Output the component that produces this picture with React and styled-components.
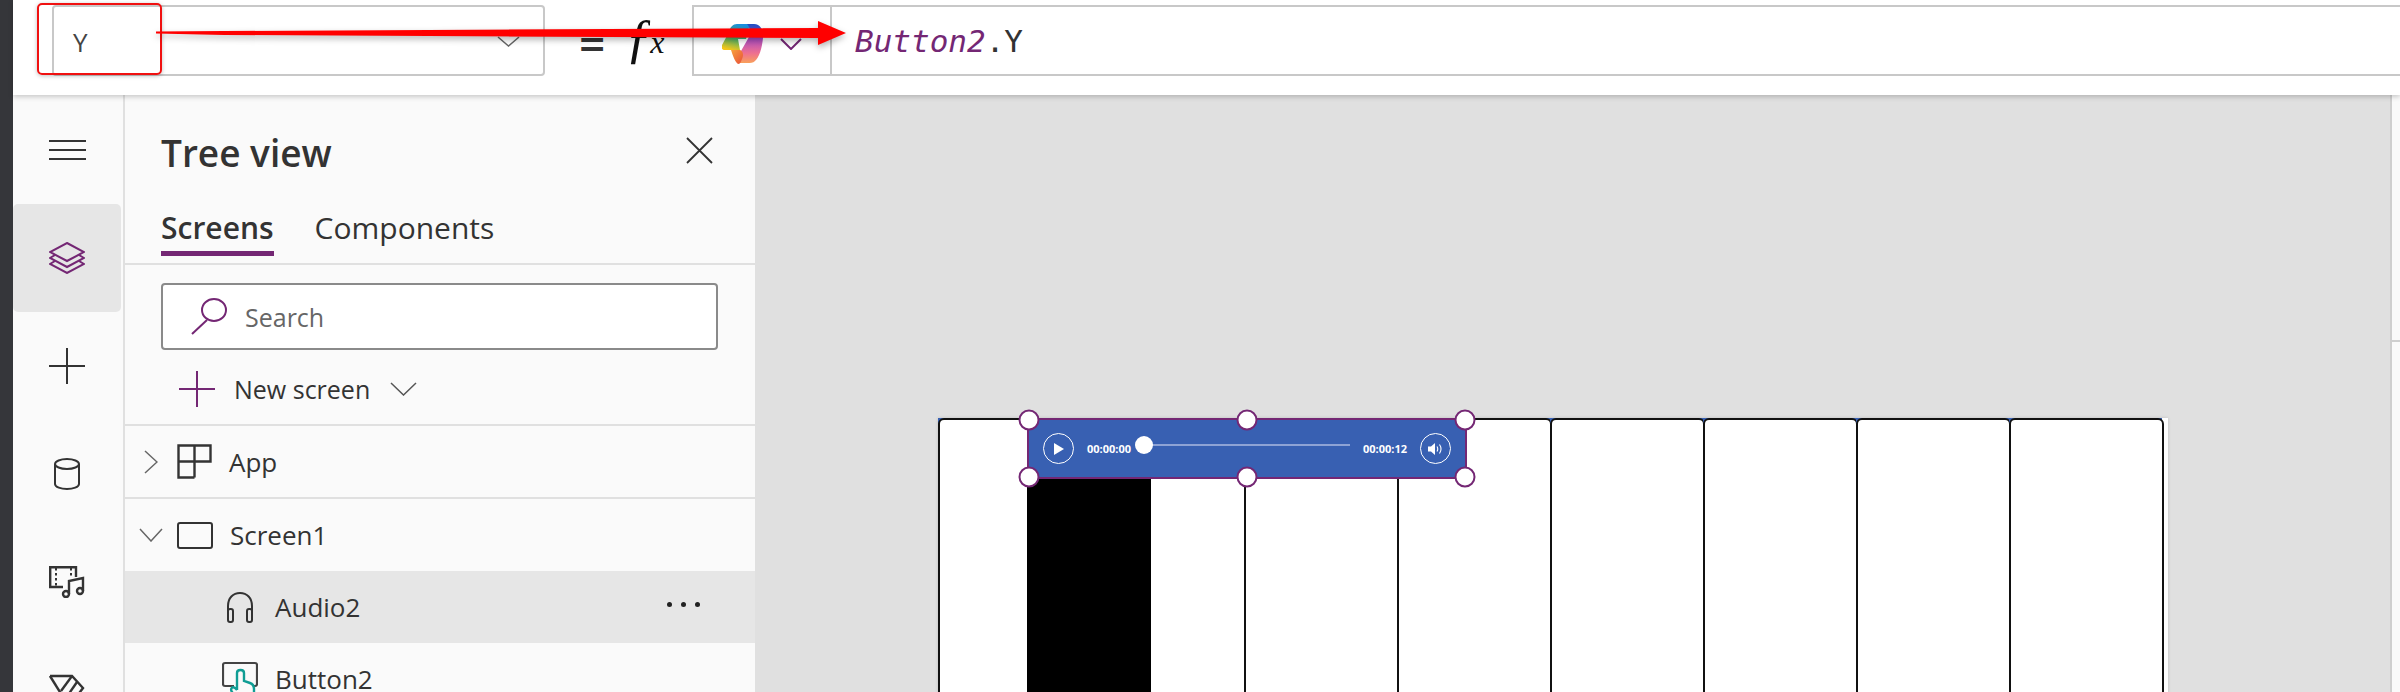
import React from "react";
import styled, { createGlobalStyle } from "styled-components";

const PURPLE = "#742774";
const INK = "#333333";

const KEY_COUNT = 8;

const App = () => {
  return (
    <Page>
      <GlobalStyle />
      <Strip />
      <Main>
        <TopBar>
          <NameBox>
            <NameValue>Y</NameValue>
            <svg width="23" height="11" viewBox="0 0 23 11" fill="none" stroke="#666" strokeWidth="1.5">
              <path d="M1 1 L11.5 10 L22 1" />
            </svg>
          </NameBox>
          <FxArea>
            <Equals>=</Equals>
            <Fx>
              ƒ<sup>x</sup>
            </Fx>
          </FxArea>
          <FormulaBox>
            <CopilotCell>
              <CopilotIcon />
              <svg width="22" height="12" viewBox="0 0 22 12" fill="none" stroke={PURPLE} strokeWidth="2">
                <path d="M1 1 L11 11 L21 1" />
              </svg>
            </CopilotCell>
            <FormulaText>
              <em>Button2</em>.Y
            </FormulaText>
          </FormulaBox>
        </TopBar>

        <Body>
          <Rail>
            <RailItem>
              <svg width="37" height="20" viewBox="0 0 37 20" stroke={INK} strokeWidth="2">
                <path d="M0 1 H37 M0 10 H37 M0 19 H37" />
              </svg>
            </RailItem>
            <RailItem $active>
              <svg width="36" height="32" viewBox="0 0 36 32" fill="none" stroke={PURPLE} strokeWidth="2">
                <path d="M18 1 L35 10 L18 19 L1 10 Z" />
                <path d="M6 13 L1 16 L18 25 L35 16 L30 13" />
                <path d="M6 19 L1 22 L18 31 L35 22 L30 19" />
              </svg>
            </RailItem>
            <RailItem>
              <svg width="36" height="36" viewBox="0 0 36 36" stroke={INK} strokeWidth="2">
                <path d="M0 18 H36 M18 0 V36" />
              </svg>
            </RailItem>
            <RailItem>
              <svg width="28" height="32" viewBox="0 0 28 32" fill="none" stroke={INK} strokeWidth="2">
                <ellipse cx="14" cy="6" rx="12" ry="5" />
                <path d="M2 6 V26 C2 29 8 31 14 31 C20 31 26 29 26 26 V6" />
              </svg>
            </RailItem>
            <RailItem>
              <svg width="37" height="32" viewBox="0 0 37 32" fill="none" stroke={INK} strokeWidth="2.4">
                <path d="M14 21 H1.2 V1.2 H27 V11" />
                <path d="M7 2 V21 M22 2 V10" strokeWidth="2" strokeDasharray="2.5 2.5" />
                <circle cx="17" cy="28" r="3" />
                <circle cx="31" cy="25" r="3" />
                <path d="M20 28 V15 L34 12 V25" />
              </svg>
            </RailItem>
            <RailItem>
              <svg width="36" height="32" viewBox="0 0 36 32" fill="none" stroke={INK} strokeWidth="2.4">
                <path d="M1 2 H23 L34 14 L22 30" />
                <path d="M1 2 L19 31" />
                <path d="M23 2 L12 17" />
                <path d="M28 8 L17 24" />
              </svg>
            </RailItem>
          </Rail>

          <Panel>
            <PanelHeader>
              <Title>Tree view</Title>
              <svg width="27" height="27" viewBox="0 0 27 27" stroke={INK} strokeWidth="1.8">
                <path d="M1 1 L26 26 M26 1 L1 26" />
              </svg>
            </PanelHeader>
            <Tabs>
              <Tab $active>Screens</Tab>
              <Tab>Components</Tab>
            </Tabs>
            <SearchBox>
              <svg width="37" height="37" viewBox="0 0 37 37" fill="none" stroke={PURPLE} strokeWidth="2">
                <ellipse cx="23" cy="12" rx="12" ry="11" />
                <path d="M16 22 L1 36" />
              </svg>
              <SearchLabel>Search</SearchLabel>
            </SearchBox>
            <NewScreen>
              <svg width="36" height="36" viewBox="0 0 36 36" stroke={PURPLE} strokeWidth="2">
                <path d="M0 18 H36 M18 0 V36" />
              </svg>
              <NewScreenLabel>New screen</NewScreenLabel>
              <svg width="27" height="14" viewBox="0 0 27 14" fill="none" stroke="#555" strokeWidth="1.5">
                <path d="M1 1 L13.5 13 L26 1" />
              </svg>
            </NewScreen>

            <Row $divider>
              <ChevronSlot>
                <svg width="14" height="24" viewBox="0 0 14 24" fill="none" stroke="#666" strokeWidth="1.5">
                  <path d="M1 1 L13 12 L1 23" />
                </svg>
              </ChevronSlot>
              <svg width="35" height="35" viewBox="0 0 35 35" fill="none" stroke={INK} strokeWidth="2.4">
                <path d="M1.5 1.5 H33.5 V17.5 H1.5 Z M17.5 1.5 V33.5 M1.5 17.5 V33.5 H17.5" />
              </svg>
              <RowLabel>App</RowLabel>
            </Row>
            <Row>
              <ChevronSlot>
                <svg width="24" height="14" viewBox="0 0 24 14" fill="none" stroke="#666" strokeWidth="1.5">
                  <path d="M1 1 L12 13 L23 1" />
                </svg>
              </ChevronSlot>
              <svg width="36" height="27" viewBox="0 0 36 27" fill="none" stroke={INK} strokeWidth="2">
                <rect x="1" y="1" width="34" height="25" rx="2" />
              </svg>
              <RowLabel>Screen1</RowLabel>
            </Row>
            <Row $child $selected>
              <IconSlot>
                <svg width="28" height="31" viewBox="0 0 28 31" fill="none" stroke={INK} strokeWidth="2">
                  <path d="M2 22 V14 C2 6 7 1 14 1 C21 1 26 6 26 14 V22" />
                  <rect x="2" y="17" width="5" height="13" rx="2" />
                  <rect x="21" y="17" width="5" height="13" rx="2" />
                </svg>
              </IconSlot>
              <RowLabel>Audio2</RowLabel>
              <Dots>
                <i />
                <i />
                <i />
              </Dots>
            </Row>
            <Row $child>
              <IconSlot>
                <svg width="36" height="48" viewBox="0 0 36 48" fill="none" strokeWidth="2.2">
                  <path d="M12 31 H3 Q1 31 1 29 V10 Q1 8 3 8 H33 Q35 8 35 10 V29 Q35 31 33 31 H31" stroke="#444" />
                  <path
                    d="M15 35 V18 C15 14 22 14 22 18 V26 L28 28 C31 29 32 31 32 34 V44 M15 35 L13 33 C10 31 8 34 10 37 L15 46"
                    stroke="#0f9d94"
                    strokeWidth="2.4"
                  />
                </svg>
              </IconSlot>
              <RowLabel>Button2</RowLabel>
            </Row>
          </Panel>

          <Canvas>
            <Screen>
              {Array.from({ length: KEY_COUNT }).map((_, i) => (
                <KeyCell key={i}>
                  <Key />
                </KeyCell>
              ))}
              <BlackKey />
              <AudioControl>
                <RoundButton>
                  <svg width="10" height="12" viewBox="0 0 10 12" fill="#fff">
                    <path d="M0 0 L10 6 L0 12 Z" />
                  </svg>
                </RoundButton>
                <TimeLabel>00:00:00</TimeLabel>
                <Track>
                  <Thumb />
                </Track>
                <TimeLabel>00:00:12</TimeLabel>
                <RoundButton>
                  <svg width="15" height="12" viewBox="0 0 15 12" fill="none" stroke="#fff" strokeWidth="1.1">
                    <path d="M0 3.5 H3 L7 0 V12 L3 8.5 H0 Z" fill="#fff" stroke="none" />
                    <path d="M9 3.5 Q10.5 6 9 8.5 M11.5 1.5 Q14.5 6 11.5 10.5" />
                  </svg>
                </RoundButton>
                <Handle $x="0%" $y="0%" />
                <Handle $x="50%" $y="0%" />
                <Handle $x="100%" $y="0%" />
                <Handle $x="0%" $y="100%" />
                <Handle $x="50%" $y="100%" />
                <Handle $x="100%" $y="100%" />
              </AudioControl>
            </Screen>
          </Canvas>

          <SidePanel />
        </Body>
      </Main>

      <RedBox />
      <Arrow viewBox="0 0 690 24" width="690" height="24">
        <path d="M0 10.5 L68 10 L662 7 V0 L690 12 L662 24 V17 L68 14 L0 12.5 Z" fill="#ff0000" />
      </Arrow>
    </Page>
  );
};

export default App;

const CopilotIcon = () => (
  <svg width="42" height="40" viewBox="0 0 42 40">
    <defs>
      <linearGradient id="cpLeft" x1="0.3" y1="1" x2="0.6" y2="0">
        <stop offset="0" stopColor="#f5c518" />
        <stop offset="0.45" stopColor="#4fb56a" />
        <stop offset="1" stopColor="#1a8fe0" />
      </linearGradient>
      <linearGradient id="cpRight" x1="0.5" y1="0" x2="0.5" y2="1">
        <stop offset="0" stopColor="#1d4fc4" />
        <stop offset="0.4" stopColor="#b04fc0" />
        <stop offset="0.75" stopColor="#ee7090" />
        <stop offset="1" stopColor="#f9a05a" />
      </linearGradient>
      <linearGradient id="cpFold" x1="0" y1="0" x2="1" y2="1">
        <stop offset="0" stopColor="#f7a03c" />
        <stop offset="1" stopColor="#e8503a" />
      </linearGradient>
    </defs>
    <path d="M7 8 C8 3 11 0 15 0 H28 L24 15 H16 L18 26 H3 C0 26 -1 24 0 21 Z" fill="url(#cpLeft)" />
    <path d="M25 0 H32 C38 0 42 6 41 14 C40 24 37 34 33 37 C31 39 28 39 26 39 H16 L19 27 L27 13 C28 8 28 3 25 0 Z" fill="url(#cpRight)" />
    <path d="M9 26 H18 C21 27 22 31 20 35 C19 38 18 40 16 40 C13 38 11 32 9 26 Z" fill="url(#cpFold)" />
  </svg>
);

const GlobalStyle = createGlobalStyle`
  html, body {
    margin: 0;
    padding: 0;
    height: 100%;
    overflow: hidden;
  }
  * {
    box-sizing: border-box;
  }
`;

const Page = styled.div`
  position: relative;
  display: flex;
  width: 2400px;
  height: 692px;
  overflow: hidden;
  background: #fafafa;
  color: ${INK};
  font-family: "Open Sans", "Noto Sans", sans-serif;
`;

const Strip = styled.div`
  flex: 0 0 13px;
  background: #35363a;
`;

const Main = styled.div`
  flex: 1;
  display: flex;
  flex-direction: column;
  min-width: 0;
`;

const TopBar = styled.header`
  position: relative;
  z-index: 2;
  flex: 0 0 95px;
  display: flex;
  align-items: flex-start;
  padding: 5px 0 0 39px;
  background: #fff;
  box-shadow: 0 2px 5px rgba(0, 0, 0, 0.2);
`;

const NameBox = styled.div`
  flex: 0 0 493px;
  height: 71px;
  display: flex;
  align-items: center;
  justify-content: space-between;
  padding: 2px 23px 0 19px;
  border: 2px solid #c8c8c8;
  border-radius: 4px;
`;

const NameValue = styled.span`
  font-size: 26px;
  color: #444;
`;

const FxArea = styled.div`
  flex: 0 0 147px;
  height: 71px;
  display: flex;
  align-items: center;
  padding-left: 34px;
  gap: 20px;
`;

const Equals = styled.span`
  margin-top: 4px;
  font-size: 46px;
  font-weight: 600;
  line-height: 1;
  color: #333;
`;

const Fx = styled.span`
  margin-top: -6px;
  font-family: "Liberation Serif", serif;
  font-style: italic;
  font-size: 54px;
  line-height: 1;
  color: #111;

  sup {
    margin-left: -2px;
    font-size: 32px;
    vertical-align: 3px;
    line-height: 0;
  }
`;

const FormulaBox = styled.div`
  flex: 1;
  height: 71px;
  display: flex;
  align-items: center;
  border: 2px solid #c8c8c8;
  border-right: 0;
`;

const CopilotCell = styled.div`
  flex: 0 0 138px;
  height: 100%;
  display: flex;
  align-items: center;
  gap: 16px;
  padding: 6px 0 0 28px;
  border-right: 2px solid #c8c8c8;
`;

const FormulaText = styled.div`
  padding-left: 23px;
  font-family: "DejaVu Sans Mono", "Liberation Mono", monospace;
  font-size: 31px;
  color: #333;

  em {
    color: ${PURPLE};
    font-style: italic;
  }
`;

const Body = styled.div`
  flex: 1;
  display: flex;
  min-height: 0;
`;

const Rail = styled.nav`
  flex: 0 0 112px;
  padding-top: 1px;
  border-right: 2px solid #e0e0e0;
  background: #fafafa;
`;

const RailItem = styled.div`
  width: 108px;
  height: 108px;
  display: flex;
  align-items: center;
  justify-content: center;
  border-radius: 5px;
  background: ${(props) => (props.$active ? "#e6e6e6" : "transparent")};
`;

const Panel = styled.aside`
  flex: 0 0 630px;
  background: #fafafa;
`;

const PanelHeader = styled.div`
  height: 110px;
  display: flex;
  align-items: center;
  justify-content: space-between;
  padding: 0 42px 0 36px;
`;

const Title = styled.h2`
  margin: 4px 0 0;
  font-size: 37px;
  font-weight: 600;
  color: ${INK};
`;

const Tabs = styled.div`
  height: 60px;
  display: flex;
  align-items: flex-start;
  gap: 41px;
  padding-left: 36px;
  border-bottom: 2px solid #e0e0e0;
`;

const Tab = styled.div`
  height: 51px;
  font-size: 30px;
  font-weight: ${(props) => (props.$active ? 600 : 400)};
  line-height: 46px;
  border-bottom: 5px solid ${(props) => (props.$active ? PURPLE : "transparent")};
`;

const SearchBox = styled.div`
  width: 557px;
  height: 67px;
  margin: 18px 0 0 36px;
  display: flex;
  align-items: center;
  gap: 17px;
  padding-left: 28px;
  background: #fff;
  border: 2px solid #8a8a8a;
  border-radius: 4px;
`;

const SearchLabel = styled.span`
  font-size: 25px;
  color: #666;
`;

const NewScreen = styled.div`
  height: 76px;
  display: flex;
  align-items: center;
  padding: 4px 0 0 54px;
  border-bottom: 2px solid #e0e0e0;

  svg:last-child {
    margin-left: 20px;
  }
`;

const NewScreenLabel = styled.span`
  margin-left: 19px;
  font-size: 25px;
`;

const Row = styled.div`
  height: ${(props) => (props.$divider ? "73px" : "72px")};
  display: flex;
  align-items: center;
  padding-left: ${(props) => (props.$child ? "97px" : "0")};
  background: ${(props) => (props.$selected ? "#e6e6e6" : "transparent")};
  border-bottom: ${(props) => (props.$divider ? "2px solid #e0e0e0" : "0")};
`;

const ChevronSlot = styled.div`
  flex: 0 0 52px;
  display: flex;
  justify-content: center;
`;

const IconSlot = styled.div`
  flex: 0 0 36px;
  display: flex;
  justify-content: center;
`;

const RowLabel = styled.span`
  margin-left: 17px;
  font-size: 26px;
`;

const Dots = styled.div`
  margin: -6px 55px 0 auto;
  display: flex;
  gap: 9px;

  i {
    width: 5px;
    height: 5px;
    border-radius: 50%;
    background: #222;
  }
`;

const Canvas = styled.main`
  flex: 1;
  min-width: 0;
  padding: 323px 0 0 183px;
  background: #e0e0e0;
`;

const Screen = styled.div`
  position: relative;
  width: 1230px;
  height: 400px;
  display: flex;
  padding-right: 6px;
  background: #fff;
  box-shadow: 0 0 3px rgba(0, 0, 0, 0.15);
`;

const KeyCell = styled.div`
  flex: 0 0 153px;
  min-width: 0;
  background: #3860b2;
`;

/* one px wider on each side than its cell so neighbours share a border */
const Key = styled.div`
  width: 155px;
  height: 100%;
  background: #fff;
  border: 2px solid #111;
  border-radius: 6px 6px 0 0;
`;

const BlackKey = styled.div`
  position: absolute;
  left: 89px;
  top: 60px;
  width: 124px;
  height: 340px;
  background: #000;
`;

const AudioControl = styled.div`
  position: absolute;
  left: 89px;
  top: 0;
  width: 440px;
  height: 61px;
  display: flex;
  align-items: center;
  padding: 0 14px;
  background: #3860b2;
  border: 2px solid ${PURPLE};
`;

const RoundButton = styled.div`
  flex: 0 0 31px;
  height: 31px;
  display: flex;
  align-items: center;
  justify-content: center;
  border: 1.5px solid #fff;
  border-radius: 50%;
`;

const TimeLabel = styled.span`
  margin: 0 13px;
  font-family: "Open Sans", sans-serif;
  font-size: 11px;
  font-weight: 700;
  color: #fff;
`;

const Track = styled.div`
  position: relative;
  flex: 1;
  height: 2px;
  margin-top: -8px;
  background: #8ea3d5;
`;

const Thumb = styled.div`
  position: absolute;
  left: 0;
  top: -8px;
  width: 18px;
  height: 18px;
  border-radius: 50%;
  background: #fff;
  transform: translateX(-9px);
`;

const Handle = styled.div`
  position: absolute;
  left: ${(props) => props.$x};
  top: ${(props) => props.$y};
  width: 21px;
  height: 21px;
  background: #fff;
  border: 2.5px solid ${PURPLE};
  border-radius: 50%;
  transform: translate(-50%, -50%);
`;

const SidePanel = styled.aside`
  flex: 0 0 10px;
  background: #fafafa;
  border-left: 2px solid #cfcfcf;

  &::before {
    content: "";
    display: block;
    height: 245px;
    border-bottom: 2px solid #cfcfcf;
  }
`;

const RedBox = styled.div`
  position: absolute;
  z-index: 3;
  left: 37px;
  top: 3px;
  width: 125px;
  height: 72px;
  border: 2px solid #f01010;
  border-radius: 5px;
  box-shadow: 0 1px 4px rgba(0, 0, 0, 0.25);
`;

const Arrow = styled.svg`
  position: absolute;
  z-index: 4;
  left: 156px;
  top: 21px;
  filter: drop-shadow(0 3px 3px rgba(0, 0, 0, 0.3));
`;
